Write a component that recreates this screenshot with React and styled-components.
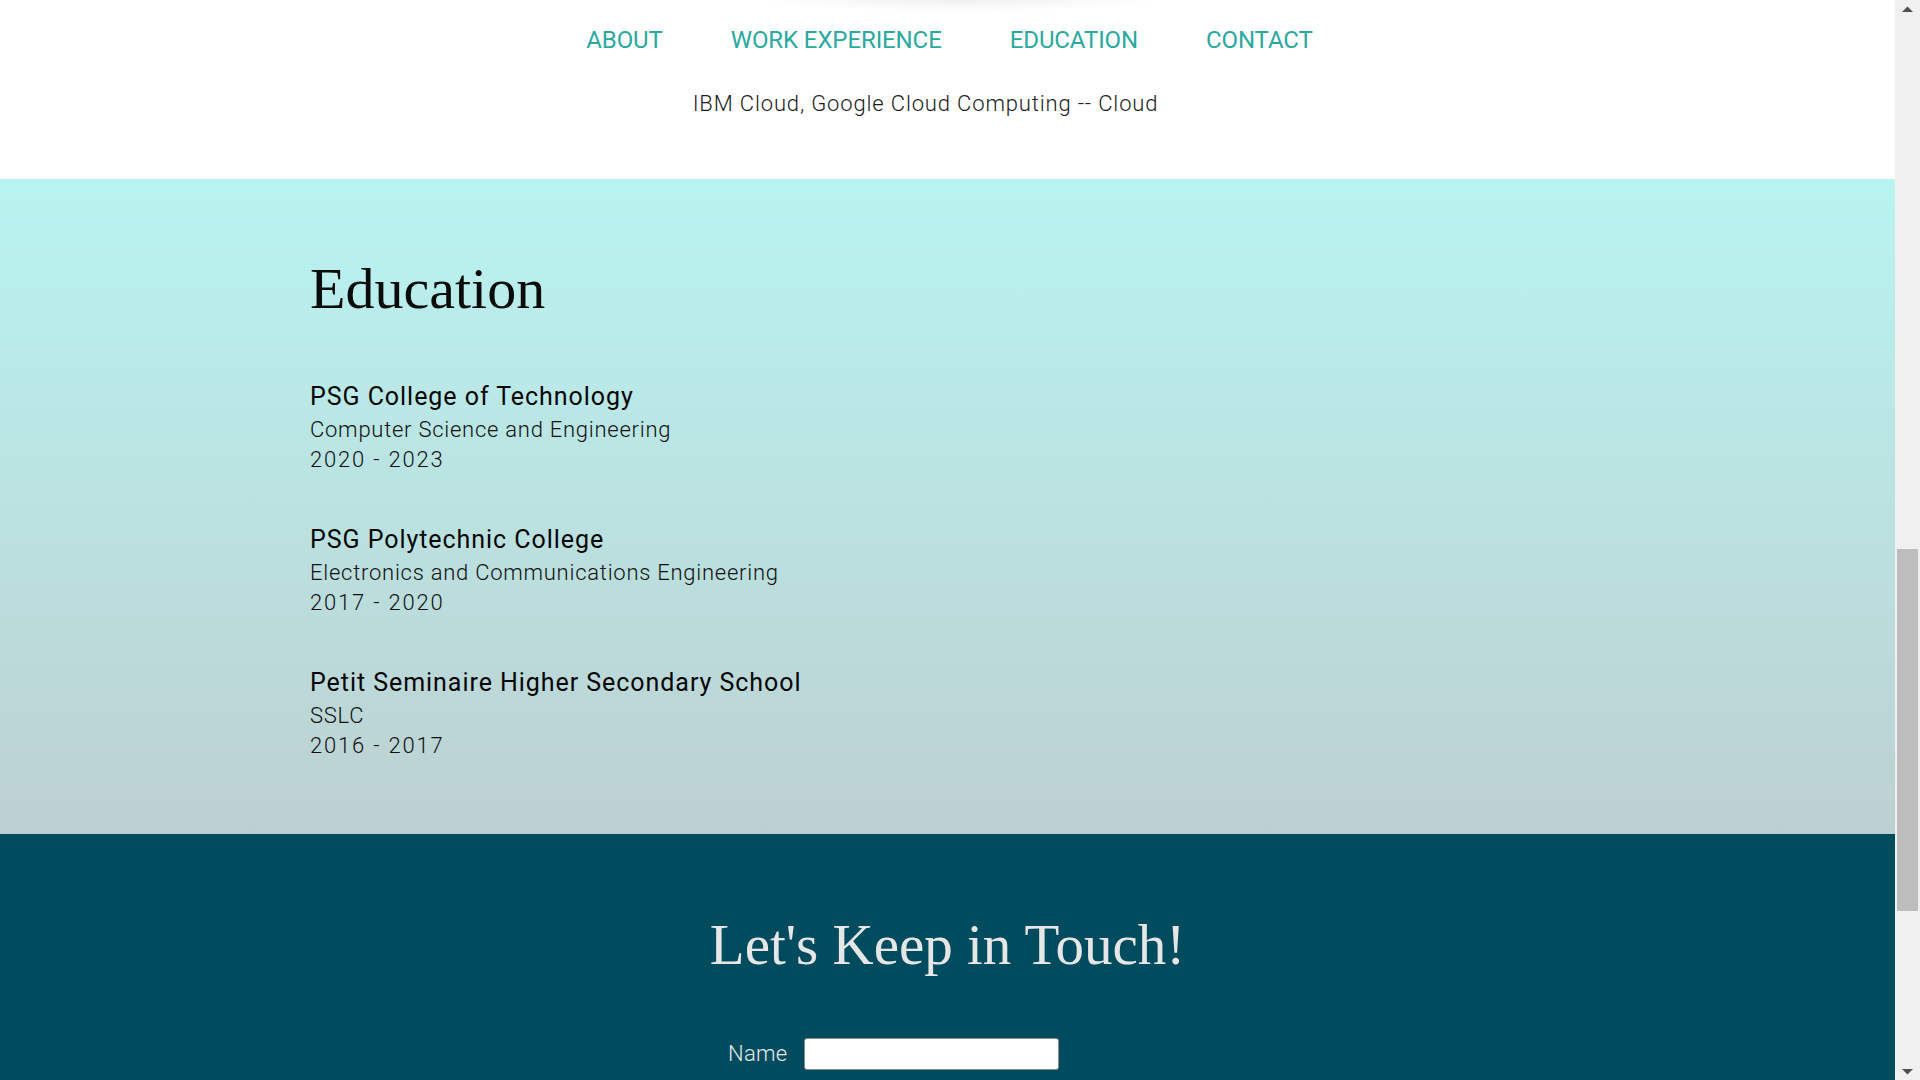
import React from "react";
import styled, { createGlobalStyle } from "styled-components";

const GlobalStyle = createGlobalStyle`
  html, body {
    margin: 0;
    padding: 0;
    height: 100%;
    overflow: hidden;
  }
  body {
    font-family: Roboto, "Noto Sans", "Liberation Sans", sans-serif;
    background: #ffffff;
  }
  * { box-sizing: border-box; }
`;

const Viewport = styled.div`
  display: flex;
  width: 1920px;
  height: 1080px;
  overflow: hidden;
`;

const Page = styled.main`
  flex: 1;
  min-width: 0;
  display: flex;
  flex-direction: column;
`;

const TopArea = styled.header`
  height: 179px;
  display: flex;
  flex-direction: column;
  align-items: center;
  padding-top: 25px;
  background:
    radial-gradient(ellipse 200px 11px at 960px 0px, rgba(0, 0, 0, 0.06), rgba(0, 0, 0, 0) 100%),
    #ffffff;
`;

const Nav = styled.nav`
  display: flex;
  gap: 68px;
  padding-left: 4px;
`;

const NavLink = styled.a`
  font-family: Roboto, "Noto Sans", sans-serif;
  font-size: 24px;
  line-height: 30px;
  font-weight: 400;
  color: #2aa99f;
  text-decoration: none;
  letter-spacing: -0.1px;
  cursor: pointer;
`;

const SkillsLine = styled.p`
  margin: 34px 0 0;
  padding-right: 44px;
  font-size: 22px;
  line-height: 30px;
  font-weight: 300;
  letter-spacing: 0.85px;
  color: #1c1c1c;
`;

const EducationSection = styled.section`
  height: 655px;
  padding: 75px 0 0 310px;
  background: linear-gradient(180deg, #b8f4f1 0%, #bdd0d1 100%);
  display: flex;
  flex-direction: column;
`;

const SerifHeading = styled.h2`
  margin: 0;
  font-family: "Liberation Serif", "Times New Roman", serif;
  font-weight: 400;
  font-size: ${(p) => p.$size}px;
  line-height: 1.2;
  color: ${(p) => p.$color};
  text-align: ${(p) => p.$align || "left"};
`;

const SchoolList = styled.div`
  display: flex;
  flex-direction: column;
  gap: 46px;
  margin-top: 54px;
`;

const School = styled.div`
  display: flex;
  flex-direction: column;
`;

const SchoolName = styled.h3`
  margin: 0;
  font-size: 25px;
  line-height: 37px;
  font-weight: 400;
  letter-spacing: 0.95px;
  color: #050505;
`;

const SchoolLine = styled.div`
  font-size: 22px;
  line-height: 30px;
  font-weight: 300;
  letter-spacing: ${(p) => (p.$wide ? "1.8px" : "0.75px")};
  color: #111111;
`;

const ContactSection = styled.section`
  flex: 1;
  background: #004c5e;
  padding-top: 77px;
  display: flex;
  flex-direction: column;
  align-items: center;
`;

const Form = styled.form`
  width: 470px;
  margin-top: 59px;
  display: grid;
  grid-template-columns: 75px 255px;
  column-gap: 16px;
  align-items: center;
`;

const Label = styled.label`
  text-align: right;
  font-size: 22px;
  line-height: 30px;
  font-weight: 300;
  color: #e4e8e8;
  letter-spacing: 0.3px;
`;

const Input = styled.input`
  width: 255px;
  height: 32px;
  border: 1px solid #8a8a8a;
  border-radius: 3px;
  background: #ffffff;
  padding: 0 8px;
  font-size: 16px;
  outline: none;
`;

const ScrollRail = styled.div`
  width: 25px;
  background: #f0f0f0;
  display: flex;
  flex-direction: column;
  align-items: center;
`;

const ArrowBox = styled.div`
  height: 17px;
  width: 100%;
  display: flex;
  align-items: center;
  justify-content: center;
`;

const Track = styled.div`
  flex: 1;
  width: 100%;
  padding: 0 2px;
  display: flex;
  flex-direction: column;
`;

const TrackGap = styled.div`
  flex: ${(p) => p.$grow};
`;

const Thumb = styled.div`
  height: 362px;
  background: #bdbdbd;
`;

const Arrow = ({ down }) => (
  <svg width="11" height="6" viewBox="0 0 11 6">
    {down ? (
      <polygon points="0,0 11,0 5.5,5.5" fill="#505050" />
    ) : (
      <polygon points="0,6 11,6 5.5,0.5" fill="#505050" />
    )}
  </svg>
);

const schools = [
  {
    name: "PSG College of Technology",
    course: "Computer Science and Engineering",
    years: "2020 - 2023",
  },
  {
    name: "PSG Polytechnic College",
    course: "Electronics and Communications Engineering",
    years: "2017 - 2020",
  },
  {
    name: "Petit Seminaire Higher Secondary School",
    course: "SSLC",
    years: "2016 - 2017",
  },
];

export default function App() {
  return (
    <>
      <GlobalStyle />
      <Viewport>
        <Page>
          <TopArea>
            <Nav>
              <NavLink>ABOUT</NavLink>
              <NavLink>WORK EXPERIENCE</NavLink>
              <NavLink>EDUCATION</NavLink>
              <NavLink>CONTACT</NavLink>
            </Nav>
            <SkillsLine>IBM Cloud, Google Cloud Computing -- Cloud</SkillsLine>
          </TopArea>

          <EducationSection>
            <SerifHeading $size={58} $color="#0b0b0b">
              Education
            </SerifHeading>
            <SchoolList>
              {schools.map((s) => (
                <School key={s.name}>
                  <SchoolName>{s.name}</SchoolName>
                  <SchoolLine>{s.course}</SchoolLine>
                  <SchoolLine $wide>{s.years}</SchoolLine>
                </School>
              ))}
            </SchoolList>
          </EducationSection>

          <ContactSection>
            <SerifHeading $size={57} $color="#e6e6e6" $align="center">
              Let's Keep in Touch!
            </SerifHeading>
            <Form onSubmit={(e) => e.preventDefault()}>
              <Label htmlFor="name">Name</Label>
              <Input id="name" type="text" />
            </Form>
          </ContactSection>
        </Page>

        <ScrollRail>
          <ArrowBox>
            <Arrow />
          </ArrowBox>
          <Track>
            <TrackGap $grow={532} />
            <Thumb />
            <TrackGap $grow={152} />
          </Track>
          <ArrowBox>
            <Arrow down />
          </ArrowBox>
        </ScrollRail>
      </Viewport>
    </>
  );
}
